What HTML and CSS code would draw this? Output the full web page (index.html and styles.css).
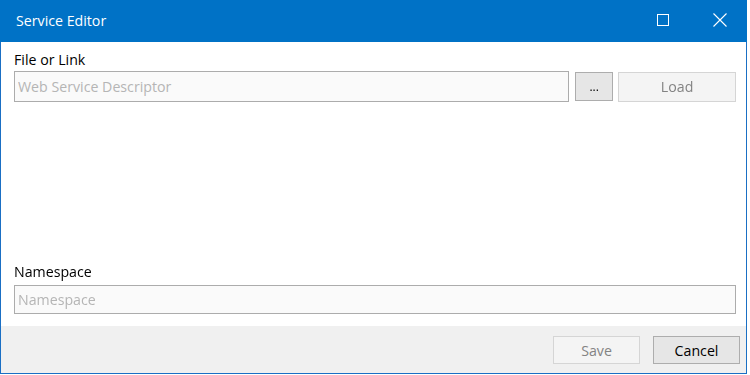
FILE: index.html
```html
<!DOCTYPE html>
<html lang="en">
<head>
  <meta charset="UTF-8">
  <title>Service Editor</title>
  <link rel="stylesheet" href="styles.css">
</head>
<body>
  <div class="window">
    <div class="titlebar">
      <span class="title">Service Editor</span>
      <div class="controls">
        <span class="ctl">
          <svg width="12" height="12" viewBox="0 0 12 12"><rect x="0.5" y="0.5" width="11" height="11" fill="none" stroke="#fff" stroke-width="1"/></svg>
        </span>
        <span class="ctl">
          <svg width="14" height="14" viewBox="0 0 14 14"><path d="M0.5 0.5 L13.5 13.5 M13.5 0.5 L0.5 13.5" stroke="#fff" stroke-width="1.1" fill="none"/></svg>
        </span>
      </div>
    </div>

    <div class="content">
      <label class="field-label">File or Link</label>
      <div class="file-row">
        <input type="text" class="text-input file-input" placeholder="Web Service Descriptor" autofocus>
        <button class="btn btn-browse">...</button>
        <button class="btn btn-load" disabled>Load</button>
      </div>

      <div class="spacer"></div>

      <label class="field-label">Namespace</label>
      <input type="text" class="text-input ns-input" placeholder="Namespace">
    </div>

    <div class="footer">
      <button class="btn btn-footer" disabled>Save</button>
      <button class="btn btn-footer btn-cancel">Cancel</button>
    </div>
  </div>
</body>
</html>
```

FILE: styles.css
```css
body {
  margin: 0;
  background: #fff;
  font-family: 'Open Sans', 'Noto Sans', sans-serif;
}
.window {
  width: 747px;
  height: 374px;
  box-sizing: border-box;
  border: 1px solid #1a6fc4;
  border-top: none;
  display: flex;
  flex-direction: column;
  background: #fff;
}
.titlebar {
  height: 42px;
  flex: none;
  background: #0072c6;
  display: flex;
  align-items: center;
  margin: 0 -1px;
  color: #fff;
}
.title {
  padding-left: 16px;
  font-size: 14.2px;
  padding-bottom: 2px;
}
.controls {
  margin-left: auto;
  display: flex;
  align-items: center;
  padding-right: 20px;
}
.ctl {
  display: flex;
  align-items: center;
  justify-content: center;
  margin-top: -2px;
}
.ctl:first-child {
  margin-right: 44px;
}
.content {
  flex: 1;
  display: flex;
  flex-direction: column;
  padding: 8px 10px 12px 13px;
}
.field-label {
  font-size: 14.2px;
  line-height: 20px;
  color: #000;
}
.file-row {
  display: flex;
  align-items: center;
  margin-top: 1px;
}
.text-input {
  box-sizing: border-box;
  border: 1px solid #acacac;
  background: #fafafa;
  font-family: inherit;
  font-size: 14.2px;
  padding: 0 3px;
  color: #000;
  outline: none;
  caret-color: #000;
}
.text-input::placeholder {
  color: #b5b5b5;
}
.file-input {
  width: 556px;
  height: 31px;
}
.ns-input {
  width: 100%;
  height: 29px;
  margin-top: 3px;
}
.spacer {
  flex: 1;
}
.btn {
  box-sizing: border-box;
  font-family: inherit;
  font-size: 14.2px;
  height: 29px;
  padding: 0;
  border: 1px solid #adadad;
  background: #e6e6e6;
  color: #000;
}
.btn-browse {
  width: 38px;
  margin-left: 6px;
  font-size: 12px;
}
.btn-load {
  width: 118px;
  margin-left: 5px;
  height: 30px;
  background: #f4f4f4;
  border-color: #d5d5d5;
  color: #838383;
}
.footer {
  height: 47px;
  flex: none;
  background: #f0f0f0;
  display: flex;
  justify-content: flex-end;
  align-items: flex-start;
  padding: 10px 6px 0 0;
  box-sizing: border-box;
  gap: 13px;
}
.btn-footer {
  width: 87px;
  height: 28px;
}
.btn-footer:disabled {
  background: #f4f4f4;
  border-color: #d5d5d5;
  color: #838383;
}
```
